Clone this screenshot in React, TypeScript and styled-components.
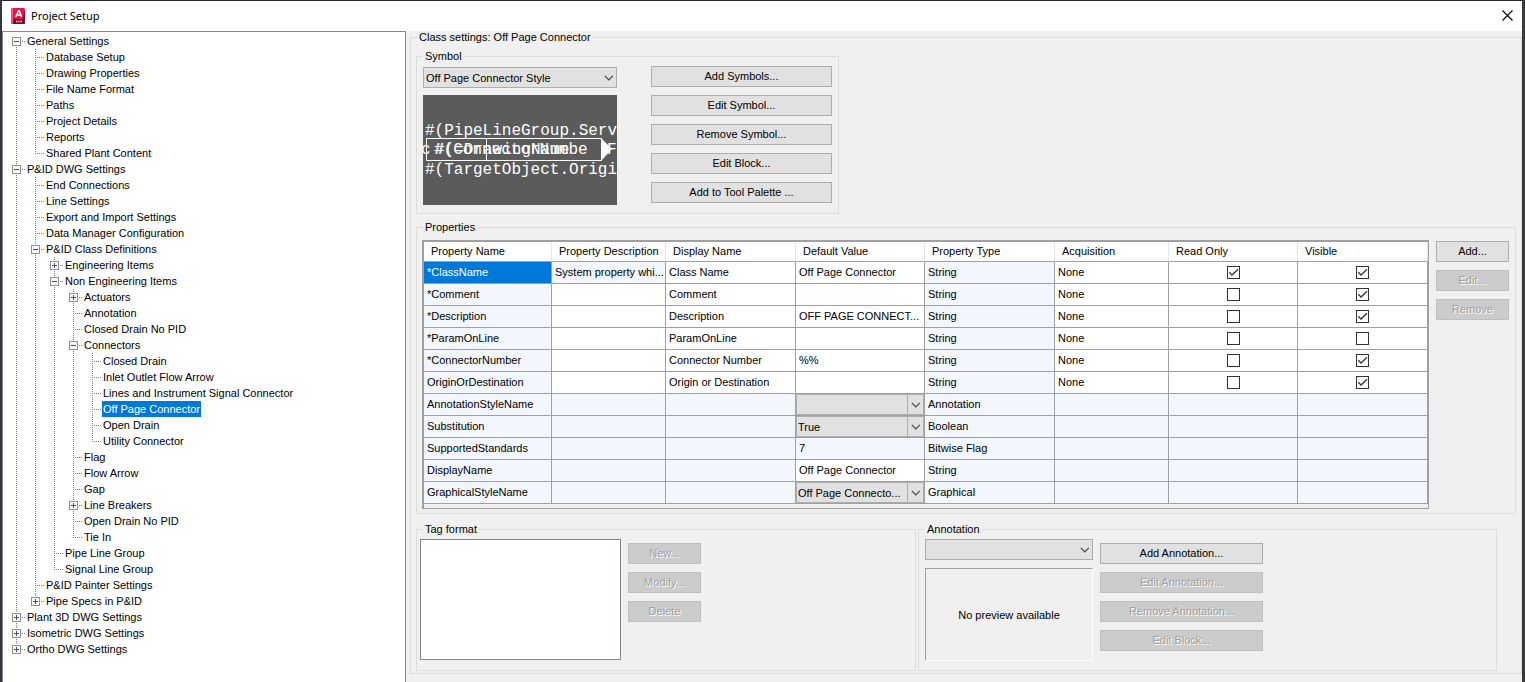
import React, { useState } from 'react';
import styled, { createGlobalStyle, css } from 'styled-components';

const GlobalStyle = createGlobalStyle`
  *, *::before, *::after { box-sizing: border-box; }
  body {
    margin: 0;
    background: #34373b;
    color: #000;
    font-family: "Liberation Sans", Arial, sans-serif;
    font-size: 11px;
    line-height: 16px;
  }
  button, select, input { font: inherit; color: inherit; margin: 0; }
`;

/* ---------- window frame ---------- */

const Dialog = styled.main`
  display: grid;
  grid-template-rows: 30px 1fr;
  min-height: 100vh;
  border: solid #26232a;
  border-width: 1px 3px 0 2px;
  border-right-color: #3a3b3d;
  border-left-color: #33373d;
  background: #f0f0f0;
`;

const TitleBar = styled.header`
  display: flex;
  align-items: center;
  gap: 6px;
  padding-left: 9px;
  background: #fff;
`;

const Title = styled.h1`
  flex: 1;
  margin: 0;
  font-family: "Noto Sans", "Open Sans", sans-serif;
  font-size: 11px;
  font-weight: 400;
  line-height: 16px;
`;

const CloseButton = styled.button`
  display: grid;
  place-items: center;
  width: 30px;
  height: 30px;
  padding: 0 0 2px;
  border: 0;
  background: none;
`;

const Body = styled.div`
  display: grid;
  grid-template-columns: 404px minmax(0, 1fr);
`;

/* ---------- tree ---------- */

const TreePanel = styled.nav`
  padding: 1px 0 8px 4px;
  border: 1px solid #828790;
  border-bottom: 0;
  background: #fff;
`;

const TreeRow = styled.div`
  display: flex;
  height: 16px;
`;

const vertical = 'repeating-linear-gradient(180deg, #808080 0 1px, transparent 1px 2px)';
const horizontal = 'repeating-linear-gradient(90deg, #808080 0 1px, transparent 1px 2px)';

type Line = 'none' | 'full' | 'top' | 'bottom';

const Guide = styled.span<{ $line: Line; $branch?: boolean }>`
  flex: none;
  width: 19px;
  padding: 4px 0 0 5px;
  background-repeat: no-repeat;
  background-image: ${(p) => (p.$line === 'none' ? 'none' : vertical)}, ${(p) => (p.$branch ? horizontal : 'none')};
  background-size:
    1px ${(p) => (p.$line === 'full' ? '16px' : '8px')},
    9px 1px;
  background-position:
    9px ${(p) => (p.$line === 'bottom' ? '8px' : '0')},
    9px 8px;
`;

const Expander = styled.button`
  display: block;
  width: 9px;
  height: 9px;
  padding: 0;
  border: 0;
  background: none;
  line-height: 0;
`;

const NodeLabel = styled.span<{ $selected: boolean }>`
  padding: 0 1px;
  white-space: nowrap;
  cursor: default;
  ${(p) => p.$selected && css`
    background: #0078d7;
    color: #fff;
  `}
`;

/* ---------- shared controls ---------- */

const Group = styled.fieldset`
  min-width: 0;
  margin: 0;
  padding: 0;
  border: 1px solid #dcdcdc;
`;

const Legend = styled.legend`
  margin-left: 6px;
  padding: 0 2px;
  line-height: 13px;
`;

const Button = styled.button<{ $width: number }>`
  width: ${(p) => p.$width}px;
  height: 21px;
  padding: 0;
  border: 1px solid #adadad;
  background: #e1e1e1;
  line-height: 19px;
  white-space: nowrap;
  &:disabled {
    border-color: #bfbfbf;
    background: #ccc;
    color: #a0a0a0;
    text-shadow: 1px 1px 0 #fff;
  }
`;

const ButtonColumn = styled.div<{ $top?: number }>`
  display: flex;
  flex-direction: column;
  gap: 8px;
  padding-top: ${(p) => p.$top ?? 0}px;
`;

const SelectBox = styled.span<{ $cell?: boolean }>`
  display: grid;
  grid-template-columns: minmax(0, 1fr) 17px;
  align-items: center;
  height: 21px;
  select {
    grid-area: 1 / 1 / 2 / 3;
    width: 100%;
    height: 21px;
    padding: 0 ${(p) => (p.$cell ? 16 : 20)}px 0 ${(p) => (p.$cell ? 1 : 2)}px;
    appearance: none;
    border: 1px solid #adadad;
    border-radius: 0;
    background: #e1e1e1;
    text-overflow: ellipsis;
  }
  svg {
    grid-area: 1 / 2;
    justify-self: center;
    pointer-events: none;
  }
  ${(p) => p.$cell && css`
    &::after {
      content: '';
      grid-area: 1 / 2;
      height: 21px;
      border-left: 1px solid #adadad;
      pointer-events: none;
    }
  `}
`;

const CheckBox = styled.span`
  display: inline-grid;
  vertical-align: top;
  margin-top: 4px;
  input {
    grid-area: 1 / 1;
    width: 13px;
    height: 13px;
    appearance: none;
    border: 1px solid #333;
    background: #fff;
  }
  svg {
    grid-area: 1 / 1;
    visibility: hidden;
    pointer-events: none;
  }
  input:checked + svg { visibility: visible; }
`;

/* ---------- right side ---------- */

const Settings = styled.section`
  padding: 0 0 8px 4px;
`;

const SettingsStack = styled.div`
  display: flex;
  flex-direction: column;
  align-items: stretch;
  padding: 6px 5px 2px;
`;

const SymbolGroup = styled(Group)`
  align-self: flex-start;
  margin-bottom: 7px;
`;

const SymbolContent = styled.div`
  display: flex;
  gap: 34px;
  padding: 3px 6px 8px;
`;

const SymbolPicker = styled.div`
  display: flex;
  flex-direction: column;
  gap: 7px;
  width: 194px;
  padding-top: 1px;
`;

const Preview = styled.svg`
  display: block;
  width: 194px;
  height: 110px;
  background: #5b5b5b;
`;

const PropertiesContent = styled.div`
  display: flex;
  align-items: flex-start;
  gap: 7px;
  padding: 6px 6px 4px 5px;
`;

const TableFrame = styled.div`
  flex: 1;
  min-width: 0;
  padding-bottom: 4px;
  border: solid #a0a0a0;
  border-width: 2px 1px 1px 2px;
`;

const Table = styled.table`
  width: 100%;
  table-layout: fixed;
  border-spacing: 0;
  line-height: 21px;
`;

const HeadCell = styled.th`
  height: 20px;
  padding: 0 0 0 7px;
  border-right: 1px solid #e5e5e5;
  border-bottom: 1px solid #a0a0a0;
  background: #fff;
  font-weight: 400;
  line-height: 19px;
  text-align: left;
  white-space: nowrap;
`;

const Cell = styled.td<{ $tint?: boolean; $selected?: boolean; $kind?: 'check' | 'select' }>`
  height: 22px;
  padding: 0 0 0 ${(p) => (p.$kind ? 0 : 3)}px;
  border-right: 1px solid #a0a0a0;
  border-bottom: 1px solid #a0a0a0;
  background: ${(p) => (p.$selected ? '#0078d7' : p.$tint ? '#f3f7fd' : '#fff')};
  color: ${(p) => (p.$selected ? '#fff' : '#000')};
  overflow: hidden;
  text-align: ${(p) => (p.$kind === 'check' ? 'center' : 'left')};
  text-overflow: ellipsis;
  vertical-align: top;
  white-space: nowrap;
`;

const LowerRow = styled.div`
  display: grid;
  grid-template-columns: minmax(0, 500fr) minmax(0, 579fr);
  gap: 2px;
  margin: 9px 19px 0 0;
`;

const LowerContent = styled.div<{ $left: number }>`
  display: flex;
  gap: 7px;
  padding: 3px 6px 9px ${(p) => p.$left}px;
`;

const TagList = styled.select`
  width: 201px;
  height: 121px;
  padding: 0;
  border: 1px solid #828790;
  border-radius: 0;
  background: #fff;
`;

const AnnotationPicker = styled.div`
  display: flex;
  flex-direction: column;
  gap: 8px;
  width: 168px;
`;

const NoPreview = styled.div`
  display: grid;
  place-items: center;
  height: 93px;
  border: 1px solid;
  border-color: #a0a0a0 #fff #fff #a0a0a0;
`;

/* ---------- icons ---------- */

const Chevron = () => (
  <svg width="10" height="6" viewBox="0 0 10 6" fill="none" stroke="#444" strokeWidth="1.2">
    <path d="M.8 .8 4.800 4.8 8.800 .8" />
  </svg>
);

const AppIcon = () => (
  <svg width="14" height="17" viewBox="0 0 14 17" aria-hidden="true">
    <rect x="0" y="0" width="14" height="16" rx="1.5" fill="#e8124f" />
    <path d="M0 1.5V14l2 2V0H1.500Q0 0 0 1.500Z" fill="#f2557f" />
    <path d="M14 3v11.500q0 1.500-1.500 1.500H2V11h9Z" fill="#8b0a35" />
    <path d="M2 11h12v3.500q0 1.500-1.500 1.500H3Z" fill="#7a0c30" />
    <path d="M4.800 9 7.400 2.800h.7L10.700 9M5.900 7h3.700" fill="none" stroke="#fff" strokeWidth="1.500" />
    <path d="M5 13.500h1.600M7.200 13.500h1.400M9.300 13.500h1.700" stroke="#e3b9c6" strokeWidth="1.600" />
  </svg>
);

const CloseIcon = () => (
  <svg width="11" height="11" viewBox="0 0 11 11" stroke="#000" strokeWidth="1.100">
    <path d="M.5.5l10 10M10.500.5l-10 10" />
  </svg>
);

const ExpandIcon = ({ open }: { open: boolean }) => (
  <svg width="9" height="9" viewBox="0 0 9 9" shapeRendering="crispEdges">
    <rect x=".5" y=".5" width="8" height="8" fill="#fbfbfb" stroke="#919191" />
    <path d={open ? 'M2 4.500h5' : 'M2 4.500h5M4.500 2v5'} stroke="#3b5291" />
  </svg>
);

const Tick = () => (
  <svg width="13" height="13" viewBox="0 0 13 13" fill="none" stroke="#333" strokeWidth="1.300">
    <path d="M2.300 6.300 5 9 11 3.300" />
  </svg>
);

/* ---------- data ---------- */

type Node = { label: string; closed?: boolean; children?: Node[] };
const leaf = (...labels: string[]): Node[] => labels.map((label) => ({ label }));
const shut = (label: string): Node => ({ label, closed: true });

const tree: Node[] = [
  {
    label: 'General Settings',
    children: leaf('Database Setup', 'Drawing Properties', 'File Name Format', 'Paths', 'Project Details', 'Reports', 'Shared Plant Content'),
  },
  {
    label: 'P&ID DWG Settings',
    children: [
      ...leaf('End Connections', 'Line Settings', 'Export and Import Settings', 'Data Manager Configuration'),
      {
        label: 'P&ID Class Definitions',
        children: [
          shut('Engineering Items'),
          {
            label: 'Non Engineering Items',
            children: [
              shut('Actuators'),
              ...leaf('Annotation', 'Closed Drain No PID'),
              {
                label: 'Connectors',
                children: leaf('Closed Drain', 'Inlet Outlet Flow Arrow', 'Lines and Instrument Signal Connector', 'Off Page Connector', 'Open Drain', 'Utility Connector'),
              },
              ...leaf('Flag', 'Flow Arrow', 'Gap'),
              shut('Line Breakers'),
              ...leaf('Open Drain No PID', 'Tie In'),
            ],
          },
          ...leaf('Pipe Line Group', 'Signal Line Group'),
        ],
      },
      ...leaf('P&ID Painter Settings'),
      shut('Pipe Specs in P&ID'),
    ],
  },
  shut('Plant 3D DWG Settings'),
  shut('Isometric DWG Settings'),
  shut('Ortho DWG Settings'),
];

type Property = {
  name: string;
  description?: string;
  display?: string;
  value?: string;
  type: string;
  editor?: 'select' | 'fixed';
  checks?: [boolean, boolean];
};

const properties: Property[] = [
  { name: '*ClassName', description: 'System property whi...', display: 'Class Name', value: 'Off Page Connector', type: 'String', checks: [true, true] },
  { name: '*Comment', display: 'Comment', type: 'String', checks: [false, true] },
  { name: '*Description', display: 'Description', value: 'OFF PAGE CONNECT...', type: 'String', checks: [false, true] },
  { name: '*ParamOnLine', display: 'ParamOnLine', type: 'String', checks: [false, false] },
  { name: '*ConnectorNumber', display: 'Connector Number', value: '%%', type: 'String', checks: [false, true] },
  { name: 'OriginOrDestination', display: 'Origin or Destination', type: 'String', checks: [false, true] },
  { name: 'AnnotationStyleName', value: '', type: 'Annotation', editor: 'select' },
  { name: 'Substitution', value: 'True', type: 'Boolean', editor: 'select' },
  { name: 'SupportedStandards', value: '7', type: 'Bitwise Flag', editor: 'fixed' },
  { name: 'DisplayName', value: 'Off Page Connector', type: 'String' },
  { name: 'GraphicalStyleName', value: 'Off Page Connecto...', type: 'Graphical', editor: 'select' },
];

const columns: [string, number][] = [
  ['Property Name', 128],
  ['Property Description', 114],
  ['Display Name', 130],
  ['Default Value', 129],
  ['Property Type', 130],
  ['Acquisition', 114],
  ['Read Only', 129],
  ['Visible', 130],
];

/* ---------- components ---------- */

function TreeNodes({ nodes, lines, selected, onSelect }: {
  nodes: Node[];
  lines: Line[];
  selected: string;
  onSelect: (label: string) => void;
}) {
  return (
    <>
      {nodes.map((node, i) => {
        const last = i === nodes.length - 1;
        const first = lines.length === 0 && i === 0;
        const own: Line = last ? 'top' : first ? 'bottom' : 'full';
        const branchable = Boolean(node.children || node.closed);
        return (
          <React.Fragment key={node.label}>
            <TreeRow role="treeitem" aria-level={lines.length + 1} aria-selected={node.label === selected}>
              {lines.map((line, n) => <Guide key={n} $line={line} />)}
              <Guide $line={own} $branch>
                {branchable && (
                  <Expander aria-label={`Toggle ${node.label}`}>
                    <ExpandIcon open={!node.closed} />
                  </Expander>
                )}
              </Guide>
              <NodeLabel $selected={node.label === selected} onClick={() => onSelect(node.label)}>{node.label}</NodeLabel>
            </TreeRow>
            {node.children && (
              <TreeNodes
                nodes={node.children}
                lines={[...lines, last ? 'none' : 'full']}
                selected={selected}
                onSelect={onSelect}
              />
            )}
          </React.Fragment>
        );
      })}
    </>
  );
}

function DropDown({ label, value, cell }: { label: string; value: string; cell?: boolean }) {
  return (
    <SelectBox $cell={cell}>
      <select aria-label={label} defaultValue={value}>
        <option value={value}>{value}</option>
      </select>
      <Chevron />
    </SelectBox>
  );
}

function Check({ label, checked }: { label: string; checked: boolean }) {
  return (
    <CheckBox>
      <input type="checkbox" aria-label={label} defaultChecked={checked} />
      <Tick />
    </CheckBox>
  );
}

function SymbolPreview() {
  return (
    <Preview viewBox="0 0 194 110" role="img" aria-label="Symbol preview">
      <g fill="#fff" fontFamily="'Liberation Mono', monospace" fontSize="16">
        <text x="2" y="40">#(PipeLineGroup.Serv</text>
        <text x="-2" y="59">c</text>
        <text x="11" y="59">#(ConnectorNumbe</text>
        <text x="12" y="59">#(=DrawingName</text>
        <text x="184" y="59">F</text>
        <text x="2" y="79">#(TargetObject.Origi</text>
      </g>
      <path d="M3.500 43.500H178.500V65.500H3.500ZM63.500 43.500V65.500" fill="none" stroke="#fff" />
      <path d="M178 43 189 54 178 66Z" fill="#fff" />
    </Preview>
  );
}

function PropertyRow({ row, index }: { row: Property; index: number }) {
  const locked = !row.checks;
  return (
    <tr>
      <Cell $tint $selected={index === 0}>{row.name}</Cell>
      <Cell $tint={locked || index === 0}>{row.description}</Cell>
      <Cell $tint={locked}>{row.display}</Cell>
      {row.editor === 'select' ? (
        <Cell $kind="select" $tint><DropDown cell label={row.name} value={row.value ?? ''} /></Cell>
      ) : (
        <Cell $tint={row.editor === 'fixed'}>{row.value}</Cell>
      )}
      <Cell $tint>{row.type}</Cell>
      <Cell $tint={locked}>{row.checks && 'None'}</Cell>
      <Cell $kind="check" $tint={locked}>
        {row.checks && <Check label={`${row.name} read only`} checked={row.checks[0]} />}
      </Cell>
      <Cell $kind="check" $tint={locked}>
        {row.checks && <Check label={`${row.name} visible`} checked={row.checks[1]} />}
      </Cell>
    </tr>
  );
}

export default function App() {
  const [selected, setSelected] = useState('Off Page Connector');
  return (
    <>
      <GlobalStyle />
      <Dialog>
        <TitleBar>
          <AppIcon />
          <Title>Project Setup</Title>
          <CloseButton aria-label="Close"><CloseIcon /></CloseButton>
        </TitleBar>
        <Body>
          <TreePanel aria-label="Settings">
            <div role="tree">
              <TreeNodes nodes={tree} lines={[]} selected={selected} onSelect={setSelected} />
            </div>
          </TreePanel>
          <Settings>
            <Group>
              <Legend>Class settings: Off Page Connector</Legend>
              <SettingsStack>
                <SymbolGroup>
                  <Legend>Symbol</Legend>
                  <SymbolContent>
                    <SymbolPicker>
                      <DropDown label="Symbol style" value="Off Page Connector Style" />
                      <SymbolPreview />
                    </SymbolPicker>
                    <ButtonColumn>
                      <Button $width={181}>Add Symbols...</Button>
                      <Button $width={181}>Edit Symbol...</Button>
                      <Button $width={181}>Remove Symbol...</Button>
                      <Button $width={181}>Edit Block...</Button>
                      <Button $width={181}>Add to Tool Palette ...</Button>
                    </ButtonColumn>
                  </SymbolContent>
                </SymbolGroup>

                <Group>
                  <Legend>Properties</Legend>
                  <PropertiesContent>
                    <TableFrame>
                      <Table>
                        <colgroup>
                          {columns.map(([name, width]) => <col key={name} width={width} />)}
                        </colgroup>
                        <thead>
                          <tr>{columns.map(([name]) => <HeadCell key={name} scope="col">{name}</HeadCell>)}</tr>
                        </thead>
                        <tbody>
                          {properties.map((row, i) => <PropertyRow key={row.name} row={row} index={i} />)}
                        </tbody>
                      </Table>
                    </TableFrame>
                    <ButtonColumn $top={1}>
                      <Button $width={73}>Add...</Button>
                      <Button $width={73} disabled>Edit...</Button>
                      <Button $width={73} disabled>Remove</Button>
                    </ButtonColumn>
                  </PropertiesContent>
                </Group>

                <LowerRow>
                  <Group>
                    <Legend>Tag format</Legend>
                    <LowerContent $left={3}>
                      <TagList size={8} aria-label="Tag format" />
                      <ButtonColumn $top={4}>
                        <Button $width={73} disabled>New...</Button>
                        <Button $width={73} disabled>Modify...</Button>
                        <Button $width={73} disabled>Delete</Button>
                      </ButtonColumn>
                    </LowerContent>
                  </Group>
                  <Group>
                    <Legend>Annotation</Legend>
                    <LowerContent $left={6}>
                      <AnnotationPicker>
                        <DropDown label="Annotation style" value="" />
                        <NoPreview>No preview available</NoPreview>
                      </AnnotationPicker>
                      <ButtonColumn $top={4}>
                        <Button $width={163}>Add Annotation...</Button>
                        <Button $width={163} disabled>Edit Annotation...</Button>
                        <Button $width={163} disabled>Remove Annotation...</Button>
                        <Button $width={163} disabled>Edit Block...</Button>
                      </ButtonColumn>
                    </LowerContent>
                  </Group>
                </LowerRow>
              </SettingsStack>
            </Group>
          </Settings>
        </Body>
      </Dialog>
    </>
  );
}
